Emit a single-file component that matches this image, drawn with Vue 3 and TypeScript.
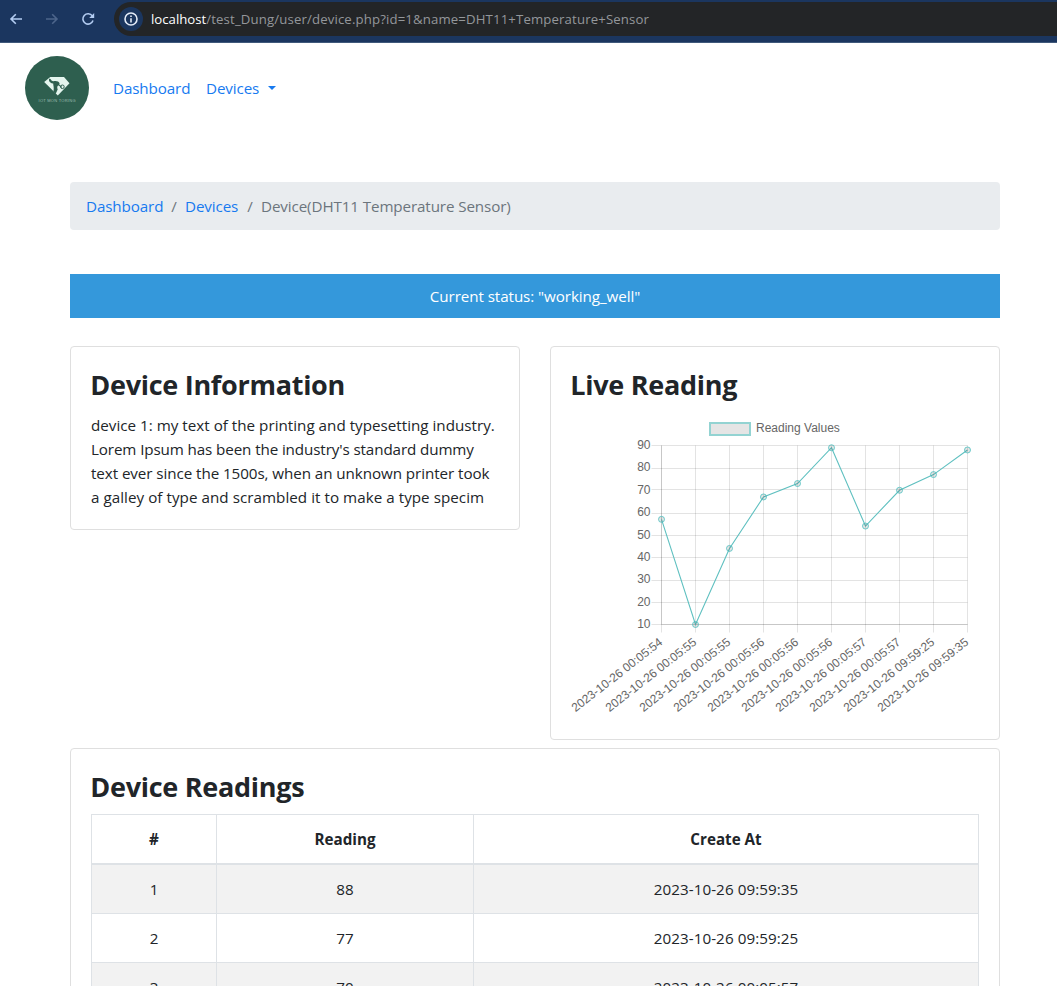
<script setup lang="ts">
interface Reading {
  value: number
  at: string
}

const readings: Reading[] = [
  { value: 57, at: '2023-10-26 00:05:54' },
  { value: 10, at: '2023-10-26 00:05:55' },
  { value: 44, at: '2023-10-26 00:05:55' },
  { value: 67, at: '2023-10-26 00:05:56' },
  { value: 73, at: '2023-10-26 00:05:56' },
  { value: 89, at: '2023-10-26 00:05:56' },
  { value: 54, at: '2023-10-26 00:05:57' },
  { value: 70, at: '2023-10-26 00:05:57' },
  { value: 77, at: '2023-10-26 09:59:25' },
  { value: 88, at: '2023-10-26 09:59:35' },
]

const latest = [...readings].reverse().slice(0, 3)
const ticks = [90, 80, 70, 60, 50, 40, 30, 20, 10]

// Chart coordinates inside the 408 x 300 drawing
const left = 90.5
const right = 396.5
const top = 28.5
const bottom = 207.5
const px = (i: number): number => left + i * 34
const py = (v: number): number => bottom - ((v - 10) / 80) * (bottom - top)
const grid = (v: number): number => Math.round(py(v)) + (v === 90 || v === 10 || v === 70 ? -0.5 : 0.5)
const line = readings.map((r, i) => `${px(i)},${py(r.value)}`).join(' ')

const paragraph = [
  'device 1: my text of the printing and typesetting industry.',
  "Lorem Ipsum has been the industry's standard dummy",
  'text ever since the 1500s, when an unknown printer took',
  'a galley of type and scrambled it to make a type specim',
]
</script>

<template>
  <div class="page">
    <header class="browser">
      <svg class="controls" width="100" height="38" viewBox="0 0 100 38" fill="none">
        <path d="M22 19H11.2M15.8 14.2L11 19L15.8 23.8" stroke="#b4cdf2" stroke-width="1.6" />
        <path d="M46 19H56.8M52.2 14.2L57 19L52.2 23.8" stroke="#4d658b" stroke-width="1.6" />
        <path d="M92.3 15.9A5.2 5.2 0 1 0 93 20.6" stroke="#b4cdf2" stroke-width="1.6" />
        <path d="M94.2 13V18H89.2Z" fill="#b4cdf2" />
      </svg>
      <div class="address">
        <span class="info">
          <svg width="14" height="14" viewBox="0 0 14 14">
            <circle cx="7" cy="7" r="6" fill="none" stroke="#e3ebf8" stroke-width="1.6" />
            <path d="M7 6.2V10.4M7 3.4V5" stroke="#e3ebf8" stroke-width="1.6" />
          </svg>
        </span>
        <span class="host">localhost</span><span class="path">/test_Dung/user/device.php?id=1&amp;name=DHT11+Temperature+Sensor</span>
      </div>
    </header>

    <nav class="navbar">
      <svg class="logo" width="64" height="64" viewBox="0 0 64 64">
        <circle cx="32" cy="32" r="32" fill="#2e5f4f" />
        <path d="M25.3 21H39L44.5 27.2L32.8 39.4L19.2 26Z" fill="#e4f5ee" />
        <path d="M24 22.8C26.5 22.5 25.8 25.3 28.3 25.2C31.5 24.4 33.6 25.2 34.6 27.3L34 29.3C32 29.8 31.9 31.7 32.7 33.5L30.6 38L28.4 35.6C29.4 31.5 28.1 29.3 28.2 27.4C26.2 27.5 24.5 26.2 24 24.5Z" fill="#2e5f4f" />
        <path d="M34 28.8L36.6 31.4" stroke="#2e5f4f" stroke-width="1.2" />
        <circle cx="37.4" cy="30.8" r="1.8" fill="none" stroke="#2e5f4f" stroke-width="1" />
        <text x="13.5" y="46.3" textLength="37" class="logo-text">IOT MON TORING</text>
      </svg>
      <a class="nav-dashboard">Dashboard</a>
      <a class="nav-devices">Devices</a>
      <span class="caret"></span>
    </nav>

    <main class="container">
      <div class="breadcrumb">
        <a class="crumb-a">Dashboard</a><span class="slash">/</span><a class="crumb-b">Devices</a><span class="slash">/</span><span class="crumb-c">Device(DHT11 Temperature Sensor)</span>
      </div>

      <div class="status">Current status: "working_well"</div>

      <div class="row">
        <section class="card">
          <h3>Device Information</h3>
          <p>
            <span v-for="(l, i) in paragraph" :key="i" class="para-line">{{ l }}</span>
          </p>
        </section>

        <section class="card live">
          <h3>Live Reading</h3>
          <svg class="chart" width="408" height="300" viewBox="0 0 408 300">
            <rect x="139" y="6" width="40" height="12" fill="#e5e5e5" stroke="#93d3d2" stroke-width="2" />
            <text x="185" y="14.7" class="label">Reading Values</text>
            <g v-for="t in ticks" :key="t">
              <line :x1="left - 10" :x2="right" :y1="grid(t)" :y2="grid(t)" class="grid" />
              <text x="79.5" :y="py(t) + 3.5" text-anchor="end" class="label">{{ t }}</text>
            </g>
            <g v-for="(r, i) in readings" :key="i">
              <line :x1="px(i)" :x2="px(i)" :y1="top" :y2="bottom + 8" class="grid" />
              <text
                :transform="`translate(${px(i) - 0.7} 223.4) rotate(-38)`"
                x="0"
                y="4.2"
                text-anchor="end"
                class="label"
              >{{ r.at }}</text>
            </g>
            <path :d="`M${left} ${top}V${bottom}H${right}`" class="axis" />
            <polyline :points="line" fill="none" stroke="#5fc0c0" stroke-width="1.1" />
            <circle v-for="(r, i) in readings" :key="i" :cx="px(i)" :cy="py(r.value)" r="3" class="dot" />
          </svg>
        </section>
      </div>

      <section class="card readings">
        <h3>Device Readings</h3>
        <table>
          <thead>
            <tr><th class="c1">#</th><th class="c2">Reading</th><th>Create At</th></tr>
          </thead>
          <tbody>
            <tr v-for="(r, i) in latest" :key="i">
              <td>{{ i + 1 }}</td><td>{{ r.value }}</td><td class="date">{{ r.at }}</td>
            </tr>
          </tbody>
        </table>
      </section>
    </main>
  </div>
</template>

<style>
body {
  margin: 0;
  overflow: hidden;
}
</style>

<style scoped>
.page {
  width: 1057px;
  height: 986px;
  overflow: hidden;
  background: #fff;
  color: #212529;
  font: 400 15.2px/24px "Open Sans", "Noto Sans", sans-serif;
}
.page * {
  box-sizing: border-box;
}
.browser {
  height: 43px;
  display: flex;
  background: #1b365f;
  border-bottom: 1px solid #40597b;
}
.controls {
  flex: none;
}
.address {
  flex: 1;
  display: flex;
  align-items: center;
  height: 34px;
  margin: 2px 0 0 14px;
  padding-left: 5px;
  border-radius: 17px 0 0 17px;
  background: #232527;
  font-size: 13.2px;
  white-space: nowrap;
}
.info {
  display: flex;
  align-items: center;
  justify-content: center;
  width: 24px;
  height: 24px;
  margin-right: 8px;
  border-radius: 50%;
  background: #1b365f;
}
.host {
  color: #fff;
  font-weight: 500;
}
.path {
  color: #94979b;
  letter-spacing: 0.14px;
}
.navbar {
  display: flex;
  align-items: center;
  height: 90px;
  padding-left: 25px;
}
.logo {
  margin-right: 24px;
}
.logo-text {
  font: 4px "Liberation Sans", sans-serif;
  fill: #9dbdb0;
}
a {
  color: #177af0;
  letter-spacing: -0.12px;
}
.nav-dashboard {
  margin-right: 16px;
  width: 77px;
  white-space: nowrap;
}
.nav-devices {
  width: 54px;
  white-space: nowrap;
}
.caret {
  margin-left: 8px;
  border: 4.5px solid transparent;
  border-top-color: #177af0;
  border-bottom: 0;
}
.container {
  width: 930px;
  margin: 49px 0 0 70px;
}
.breadcrumb {
  display: flex;
  height: 48px;
  padding: 12px 16px;
  border-radius: 4px;
  background: #e9ecef;
  color: #6c757d;
  white-space: nowrap;
}
.crumb-a {
  width: 77px;
}
.crumb-b {
  width: 54px;
}
.crumb-c {
  letter-spacing: -0.11px;
}
.slash {
  width: 22px;
  text-align: center;
}
.status {
  height: 44px;
  margin-top: 44px;
  background: #3498db;
  color: #fff;
  line-height: 45px;
  letter-spacing: -0.08px;
  text-align: center;
}
.row {
  display: flex;
  align-items: flex-start;
  gap: 30px;
  margin-top: 28px;
}
.card {
  width: 450px;
  height: 184px;
  padding: 20px;
  border: 1px solid #dfdfdf;
  border-radius: 4px;
}
.live {
  height: 394px;
}
h3 {
  margin: 0 0 0 -0.7px;
  padding-top: 1px;
  font-size: 27px;
  line-height: 34px;
  font-weight: 700;
  letter-spacing: -0.28px;
  white-space: nowrap;
}
p {
  margin: 11px 0 0;
}
.para-line {
  display: block;
  white-space: nowrap;
}
.para-line:nth-child(1) {
  letter-spacing: 0.01px;
}
.para-line:nth-child(2) {
  letter-spacing: -0.11px;
}
.para-line:nth-child(3) {
  letter-spacing: -0.07px;
}
.para-line:nth-child(4) {
  letter-spacing: 0.04px;
}
.chart {
  display: block;
  margin-top: 15px;
}
.label {
  font: 12px "Liberation Sans", Arial, sans-serif;
  fill: #666;
}
.grid {
  stroke: #000;
  stroke-opacity: 0.11;
}
.axis {
  fill: none;
  stroke: #000;
  stroke-opacity: 0.12;
}
.dot {
  fill: rgba(0, 0, 0, 0.1);
  stroke: #4bc0c0;
  stroke-opacity: 0.8;
}
.readings {
  width: 930px;
  height: 700px;
  margin-top: 8px;
}
table {
  width: 888px;
  margin-top: 10px;
  border-collapse: collapse;
  table-layout: fixed;
  text-align: center;
}
th,
td {
  height: 49px;
  padding: 12px;
  border: 1px solid #dee2e6;
}
th {
  border-bottom-width: 2px;
  font-weight: 700;
}
.date {
  letter-spacing: 0.07px;
}
.c1 {
  width: 125px;
}
.c2 {
  width: 257px;
}
tbody tr:nth-child(odd) {
  background: #f2f2f2;
}
</style>
